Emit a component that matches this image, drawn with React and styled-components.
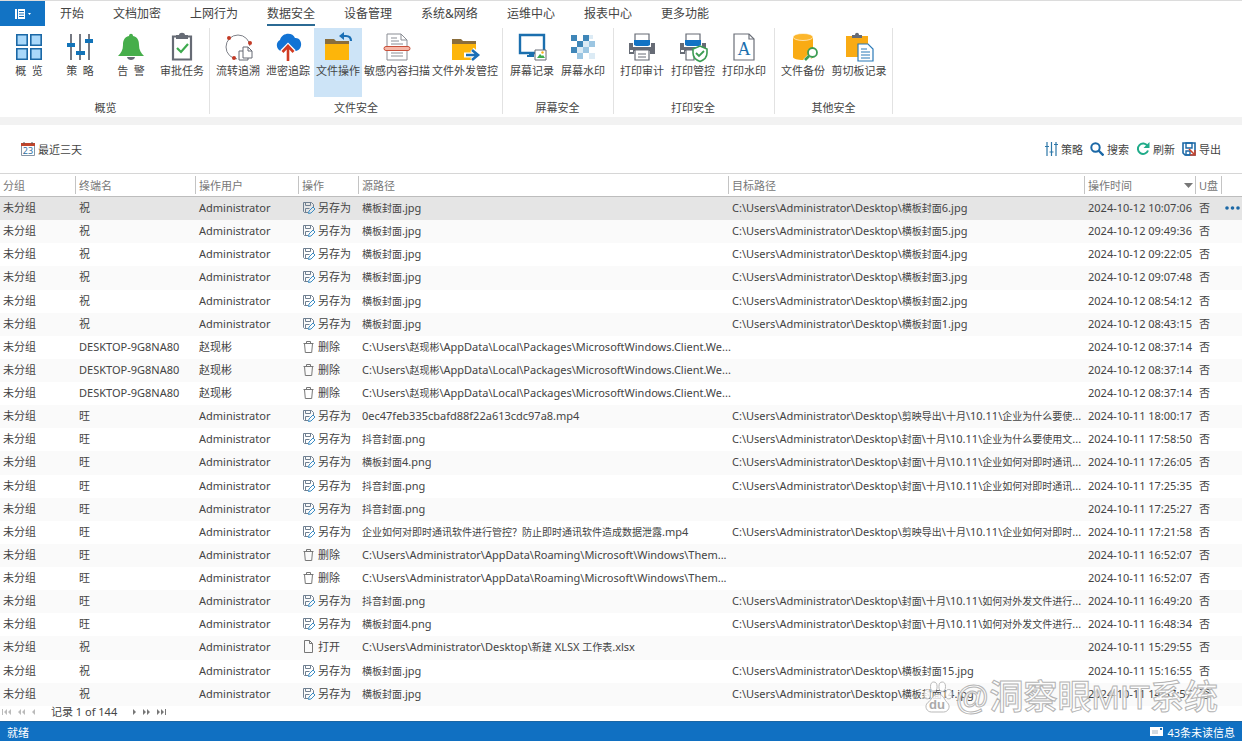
import React from "react";
import styled, { createGlobalStyle } from "styled-components";

const NAVY = "#1b68a6";
const GREY = "#666b75";

const rows = [
  ["祝", "Administrator", "save", "横板封面.jpg", "C:\\Users\\Administrator\\Desktop\\横板封面6.jpg", "2024-10-12 10:07:06"],
  ["祝", "Administrator", "save", "横板封面.jpg", "C:\\Users\\Administrator\\Desktop\\横板封面5.jpg", "2024-10-12 09:49:36"],
  ["祝", "Administrator", "save", "横板封面.jpg", "C:\\Users\\Administrator\\Desktop\\横板封面4.jpg", "2024-10-12 09:22:05"],
  ["祝", "Administrator", "save", "横板封面.jpg", "C:\\Users\\Administrator\\Desktop\\横板封面3.jpg", "2024-10-12 09:07:48"],
  ["祝", "Administrator", "save", "横板封面.jpg", "C:\\Users\\Administrator\\Desktop\\横板封面2.jpg", "2024-10-12 08:54:12"],
  ["祝", "Administrator", "save", "横板封面.jpg", "C:\\Users\\Administrator\\Desktop\\横板封面1.jpg", "2024-10-12 08:43:15"],
  ["DESKTOP-9G8NA80", "赵现彬", "delete", "C:\\Users\\赵现彬\\AppData\\Local\\Packages\\MicrosoftWindows.Client.We...", "", "2024-10-12 08:37:14"],
  ["DESKTOP-9G8NA80", "赵现彬", "delete", "C:\\Users\\赵现彬\\AppData\\Local\\Packages\\MicrosoftWindows.Client.We...", "", "2024-10-12 08:37:14"],
  ["DESKTOP-9G8NA80", "赵现彬", "delete", "C:\\Users\\赵现彬\\AppData\\Local\\Packages\\MicrosoftWindows.Client.We...", "", "2024-10-12 08:37:14"],
  ["旺", "Administrator", "save", "0ec47feb335cbafd88f22a613cdc97a8.mp4", "C:\\Users\\Administrator\\Desktop\\剪映导出\\十月\\10.11\\企业为什么要使...", "2024-10-11 18:00:17"],
  ["旺", "Administrator", "save", "抖音封面.png", "C:\\Users\\Administrator\\Desktop\\封面\\十月\\10.11\\企业为什么要使用文...", "2024-10-11 17:58:50"],
  ["旺", "Administrator", "save", "横板封面4.png", "C:\\Users\\Administrator\\Desktop\\封面\\十月\\10.11\\企业如何对即时通讯...", "2024-10-11 17:26:05"],
  ["旺", "Administrator", "save", "抖音封面.png", "C:\\Users\\Administrator\\Desktop\\封面\\十月\\10.11\\企业如何对即时通讯...", "2024-10-11 17:25:35"],
  ["旺", "Administrator", "save", "抖音封面.png", "", "2024-10-11 17:25:27"],
  ["旺", "Administrator", "save", "企业如何对即时通讯软件进行管控？防止即时通讯软件造成数据泄露.mp4", "C:\\Users\\Administrator\\Desktop\\剪映导出\\十月\\10.11\\企业如何对即时...", "2024-10-11 17:21:58"],
  ["旺", "Administrator", "delete", "C:\\Users\\Administrator\\AppData\\Roaming\\Microsoft\\Windows\\Them...", "", "2024-10-11 16:52:07"],
  ["旺", "Administrator", "delete", "C:\\Users\\Administrator\\AppData\\Roaming\\Microsoft\\Windows\\Them...", "", "2024-10-11 16:52:07"],
  ["旺", "Administrator", "save", "抖音封面.png", "C:\\Users\\Administrator\\Desktop\\封面\\十月\\10.11\\如何对外发文件进行...", "2024-10-11 16:49:20"],
  ["旺", "Administrator", "save", "横板封面4.png", "C:\\Users\\Administrator\\Desktop\\封面\\十月\\10.11\\如何对外发文件进行...", "2024-10-11 16:48:34"],
  ["祝", "Administrator", "open", "C:\\Users\\Administrator\\Desktop\\新建 XLSX 工作表.xlsx", "", "2024-10-11 15:29:55"],
  ["祝", "Administrator", "save", "横板封面.jpg", "C:\\Users\\Administrator\\Desktop\\横板封面15.jpg", "2024-10-11 15:16:55"],
  ["祝", "Administrator", "save", "横板封面.jpg", "C:\\Users\\Administrator\\Desktop\\横板封面14.jpg", "2024-10-11 14:57:57"],
];

const tabs = ["开始", "文档加密", "上网行为", "数据安全", "设备管理", "系统&网络", "运维中心", "报表中心", "更多功能"];

const Folder = () => (
  <>
    <path d="M1 6h9l2 2h13v3H1z" fill="#8a6d3b" />
    <path d="M1 11h24v16H1z" fill="#fdb50a" />
  </>
);

const Printer = () => (
  <>
    <path d="M7 9V1h14v8" fill="#fff" stroke={GREY} strokeWidth="1.2" />
    <path d="M1 10h4v4h18v-4h4v11h-5v-3H6v3H1z" fill={GREY} />
    <path d="M2 17h3v2H2z" fill="#fff" />
    <path d="M6 7h16v5l-2 1H8l-2-1z" fill="#1273c4" />
  </>
);

const icons = {
  overview: (
    <g fill="#a9d8fa" stroke={NAVY} strokeWidth="1.6">
      <path d="M1.8 1.8h10.4v10.4H1.8zM15.8 1.8h10.4v10.4H15.8zM1.8 15.8h10.4v10.4H1.8zM15.8 15.8h10.4v10.4H15.8z" />
    </g>
  ),
  policy: (
    <>
      <path d="M5 1v26M14 1v26M23 1v26" stroke={GREY} strokeWidth="1.8" />
      <path d="M1 10h8v4H1zM10 18h9v4h-9zM19 6h8v4h-8z" fill="#1273b8" />
    </>
  ),
  alarm: (
    <>
      <path d="M10 24h8c-.5 4-7.500 4-8 0z" fill={GREY} />
      <path d="M12 3c0-3 4-3 4 0 5 1 6 5 6 9 0 5 2 8 5 11H1c3-3 5-6 5-11 0-4 1-8 6-9z" fill="#46ae4b" />
    </>
  ),
  approve: (
    <>
      <path d="M5 3.500h18v23H5z" fill="#fff" stroke={GREY} strokeWidth="2.200" />
      <path d="M8 2h3c0-3 6-3 6 0h3v4H8z" fill={GREY} />
      <path d="m9 15 4 4 7-8" fill="none" stroke="#3daa4d" strokeWidth="2.200" />
    </>
  ),
  trace: (
    <>
      <circle cx="14" cy="14" r="12" fill="none" stroke="#7d8088" strokeWidth="1" />
      <g fill="#c33a25">
        <circle cx="5" cy="5" r="2" />
        <circle cx="26" cy="10" r="2" />
        <circle cx="10" cy="25" r="2" />
      </g>
      <path d="M13 13h17v17H13z" fill="#fff" />
      <path d="M15 18h9v9h-9z" fill="#fff" stroke={GREY} />
      <path d="M19 14h5l4 4v7h-9z" fill="#fff" stroke={GREY} />
      <path d="M24 14v4h4" fill="none" stroke={GREY} />
    </>
  ),
  leak: (
    <>
      <path d="M7 18a6 6 0 0 1-1-11c2-8 13-8 15-2 7-1 9 11 1 13z" fill="#1273d4" />
      <path d="M14 28V14M8 19l6-6 6 6" fill="none" stroke="#fff" strokeWidth="5" />
      <path d="M14 28V14M8.500 19l5.500-6 5.500 6" fill="none" stroke="#d13b22" strokeWidth="2.600" />
    </>
  ),
  fileop: (
    <>
      <Folder />
      <path d="M17 3h5q5 0 5 5" fill="none" stroke="#1b6fb5" strokeWidth="2.200" />
      <path d="m20-1-5 4 5 4z" fill="#1b6fb5" />
    </>
  ),
  scan: (
    <>
      <path d="M4 1h14l6 6v20H4z" fill="#fff" stroke="#8a8d94" />
      <path d="M18 1v6h6M8 5h6M8 8h8M8 11h12M8 20h12M8 23h12" fill="none" stroke="#8a8d94" />
      <rect x="1" y="13.500" width="26" height="4" rx="2" fill="#f6b8a8" stroke="#c8503a" />
    </>
  ),
  send: (
    <>
      <Folder />
      <path d="M13 22h13M21 16.500l6 5.500-6 5.500" fill="none" stroke="#fff" strokeWidth="5" />
      <path d="M15 22h12M21 17l6 5-6 5" fill="none" stroke="#1b6fb5" strokeWidth="2.600" />
    </>
  ),
  screen: (
    <>
      <path d="M2 2h24v18H2z" fill="#fff" stroke="#1b6fae" strokeWidth="2.400" />
      <path d="M11 20h5v4H9v-2h2z" fill="#1b6fae" />
      <path d="M17 17h11v10H17z" fill="#fff" stroke={GREY} />
      <path d="m19 25 3-4 2 2 1-1 2 3z" fill="#3daa4d" />
      <circle cx="24.500" cy="19.500" r="1.200" fill="#f6b21b" />
    </>
  ),
  mosaic: (
    <>
      <path d="M2 2h6v6H2zM14 2h6v6h-6zM2 14h6v6H2zM8 8h6v6H8z" fill="#3f86b8" />
      <path d="M14 14h6v6h-6zM20 8h6v6h-6zM8 20h6v6H8z" fill="#9cc6e2" />
      <path d="M20 2h4v4h-4zM14 8h6v6h-6zM8 14h6v6H8zM20 20h6v6h-6z" fill="#dcebf5" />
    </>
  ),
  print: (
    <>
      <Printer />
      <path d="M7 17h14v10H7z" fill="#fff" stroke={GREY} strokeWidth="1.200" />
      <path d="M10 21h8M10 24h8" stroke={GREY} />
    </>
  ),
  guard: (
    <>
      <Printer />
      <path d="M7 17h8v10H7z" fill="#fff" stroke={GREY} strokeWidth="1.200" />
      <path d="m21 13 7 3v4c0 4-3 7-7 8.500-4-1.500-7-4.500-7-8.500v-4z" fill="#fff" stroke="#3c9c53" strokeWidth="1.600" />
      <path d="m17 20 3 3 5-5" fill="none" stroke="#3c9c53" strokeWidth="1.800" />
    </>
  ),
  sign: (
    <>
      <path d="M4 1h15l5 5v21H4z" fill="#fff" stroke="#6b6f78" strokeWidth="1.200" />
      <path d="M19 1v5h5" fill="none" stroke="#6b6f78" strokeWidth="1.200" />
      <text x="14" y="22" textAnchor="middle" fontFamily="Liberation Serif, serif" fontSize="18" fill="#1b6fae">A</text>
    </>
  ),
  backup: (
    <>
      <path d="M4 4v20c0 4 20 4 20 0V4z" fill="#f9ab14" />
      <ellipse cx="14" cy="4" rx="10" ry="3.500" fill="#fcb62c" stroke="#fff" strokeWidth=".6" />
      <path d="m16 28 6-6" stroke="#fff" strokeWidth="5" />
      <circle cx="23.500" cy="19.500" r="4.500" fill="#fff" stroke="#3c9c53" strokeWidth="1.800" />
      <path d="m16 27 4-4" stroke="#3c9c53" strokeWidth="2.600" />
    </>
  ),
  clip: (
    <>
      <path d="M1 3h22v21H1z" fill="#f9ab14" />
      <path d="M7 5V2h3c0-3 4-3 4 0h3v3z" fill={GREY} />
      <path d="M13 11h10l5 5v12H13z" fill="#fff" stroke="#2b7ab8" strokeWidth="1.200" />
      <path d="M16 16h6M16 19h9M16 22h9M16 25h9" stroke="#2b7ab8" strokeWidth="1.200" />
    </>
  ),
};

const groups = [
  {
    title: "概览", gap: 3, pad: "0 3px 0 5px",
    items: [["overview", "概  览"], ["policy", "策  略"], ["alarm", "告  警"], ["approve", "审批任务"]],
  },
  {
    title: "文件安全", gap: 2, pad: "0 4px",
    items: [["trace", "流转追溯"], ["leak", "泄密追踪"], ["fileop", "文件操作"], ["scan", "敏感内容扫描"], ["send", "文件外发管控"]],
  },
  { title: "屏幕安全", gap: 3, pad: "0 6px 0 5px", items: [["screen", "屏幕记录"], ["mosaic", "屏幕水印"]] },
  { title: "打印安全", gap: 3, pad: "0 6px 0 4px", items: [["print", "打印审计"], ["guard", "打印管控"], ["sign", "打印水印"]] },
  { title: "其他安全", gap: 3, pad: "0 4px", items: [["backup", "文件备份"], ["clip", "剪切板记录"]] },
];

const actionNames = { save: "另存为", delete: "删除", open: "打开" };

const actionIcons = {
  save: (
    <>
      <path d="M6 11.500H2.500l-1-1v-9h8l2 2V6" stroke="#6f7f90" />
      <path d="M3.500 1.500v3h5v-3M3.500 11V7.500h4" stroke="#6f7f90" />
      <path d="m7 10 4-4 2 2-4 4-2.500.5z" stroke="#3b8cc4" />
    </>
  ),
  delete: <path d="M1.500 3.500h10M4.500 3V1.500h4V3M2.500 3.500l.8 9h6.400l.8-9" stroke="#777" />,
  open: <path d="M2.500.5h5l3 3v9h-8zM7.500.5v3h3" stroke="#777" />,
};

// Chinese runs are set a size smaller than the latin part of a path
const PathText = ({ text }) =>
  text.split(/([\u4e00-\u9fff？]+)/).map((part, i) => (i % 2 ? <Han key={i}>{part}</Han> : part));

const App = () => (
  <>
    <GlobalStyle />
    <Window>
      <TabBar>
        <FileButton aria-label="文件">
          <svg width="18" height="12" viewBox="0 0 18 12">
            <path d="M1 1h2v10H1zM4 1h7v10H4z" fill="#fff" />
            <path d="M5 3.500h5M5 6h5M5 8.500h5" stroke="#1b6fb5" />
            <path d="M14 5h3l-1.500 2z" fill="#fff" />
          </svg>
        </FileButton>
        {tabs.map((t) => (
          <Tab key={t} $active={t === "数据安全"}>{t}</Tab>
        ))}
      </TabBar>

      <Ribbon>
        {groups.map((g) => (
          <Group key={g.title} $pad={g.pad}>
            <GroupItems $gap={g.gap}>
              {g.items.map(([icon, label]) => (
                <Tool key={icon} $active={icon === "fileop"} $size={label.length}>
                  <svg width="28" height="28" viewBox="0 0 28 28" overflow="visible">{icons[icon]}</svg>
                  <span>{label}</span>
                </Tool>
              ))}
            </GroupItems>
            <GroupTitle>{g.title}</GroupTitle>
          </Group>
        ))}
      </Ribbon>

      <Toolbar>
        <Action>
          <svg width="14" height="14" viewBox="0 0 14 14">
            <path d="M.5 3.500h13v10H.5z" fill="#fff" stroke="#8695a5" />
            <path d="M0 1h14v3H0z" fill="#c0452c" />
            <path d="M3 0v2M11 0v2" stroke="#555" />
            <text x="7" y="12" textAnchor="middle" fontFamily="Noto Sans, sans-serif" fontSize="9" fill="#2f6f9f">23</text>
          </svg>
          最近三天
        </Action>
        <Actions>
          <Action>
            <svg width="14" height="14" viewBox="0 0 14 14">
              <path d="M3 0v14M7.500 0v14M12 0v14M1 4.500h4M5.500 10h4M10 2.500h4" stroke="#2d77a8" strokeWidth="1.200" />
            </svg>
            策略
          </Action>
          <Action>
            <svg width="14" height="14" viewBox="0 0 14 14">
              <circle cx="5.500" cy="5.500" r="4.200" fill="none" stroke="#1b68a6" strokeWidth="2" />
              <path d="m8.500 8.500 5 5" stroke="#1b68a6" strokeWidth="2.400" />
            </svg>
            搜索
          </Action>
          <Action>
            <svg width="14" height="14" viewBox="0 0 14 14">
              <path d="M11.500 4A5.200 5.200 0 1 0 12 8.500" fill="none" stroke="#1fab89" strokeWidth="2" />
              <path d="M13.500 0v6h-6z" fill="#1fab89" />
            </svg>
            刷新
          </Action>
          <Action>
            <svg width="14" height="14" viewBox="0 0 14 14">
              <path d="M1 1h12v12H3l-2-2z" fill="#fff" stroke="#1b68a6" strokeWidth="1.600" />
              <path d="M4 1h6v5H4zM4 9h4v4H4z" fill="none" stroke="#1b68a6" strokeWidth="1.400" />
              <path d="m7 7 5 5M13 8v5H8" fill="none" stroke="#c9442c" strokeWidth="1.600" />
            </svg>
            导出
          </Action>
        </Actions>
      </Toolbar>

      <TableArea>
        <Table>
          <colgroup>
            <Col $w={76} /><Col $w={120} /><Col $w={103} /><Col $w={60} /><Col $w={370} />
            <col />
            <Col $w={111} /><Col $w={26} /><Col $w={20} />
          </colgroup>
          <thead>
            <tr>
              <Th>分组</Th>
              <Th>终端名</Th>
              <Th>操作用户</Th>
              <Th>操作</Th>
              <Th>源路径</Th>
              <Th>目标路径</Th>
              <Th>
                <Sorted>
                  操作时间
                  <svg width="9" height="5" viewBox="0 0 9 5"><path d="M0 0h9L4.500 5z" fill="#777" /></svg>
                </Sorted>
              </Th>
              <Th>U盘</Th>
              <Th aria-label="更多" $last />
            </tr>
          </thead>
          <tbody>
            {rows.map(([host, user, action, from, to, time], i) => (
              <Row key={i} $selected={i === 0}>
                <Td>未分组</Td>
                <Td>{host}</Td>
                <Td>{user}</Td>
                <Td>
                  <Operation>
                    <svg width="14" height="13" viewBox="0 0 14 13" fill="none">{actionIcons[action]}</svg>
                    {actionNames[action]}
                  </Operation>
                </Td>
                <Td><PathText text={from} /></Td>
                <Td><PathText text={to} /></Td>
                <Td>{time}</Td>
                <Td>否</Td>
                <Td>
                  {i === 0 && (
                    <MoreButton aria-label="更多操作">
                      <svg width="15" height="4" viewBox="0 0 15 4" fill="#1b68a6">
                        <circle cx="2" cy="2" r="1.800" /><circle cx="7.500" cy="2" r="1.800" /><circle cx="13" cy="2" r="1.800" />
                      </svg>
                    </MoreButton>
                  )}
                </Td>
              </Row>
            ))}
          </tbody>
        </Table>
      </TableArea>

      <Pager>
        <PageButton aria-label="第一页"><svg width="10" height="6" viewBox="0 0 10 6"><path d="M0 0h1v6H0zM5 0v6L2 3zM9 0v6L6 3z" /></svg></PageButton>
        <PageButton aria-label="上一组"><svg width="8" height="6" viewBox="0 0 8 6"><path d="M4 0v6L1 3zM8 0v6L5 3z" /></svg></PageButton>
        <PageButton aria-label="上一页"><svg width="8" height="6" viewBox="0 0 8 6"><path d="M5 0v6L2 3z" /></svg></PageButton>
        <PageText>记录 1 of 144</PageText>
        <PageButton $on aria-label="下一页"><svg width="8" height="6" viewBox="0 0 8 6"><path d="M3 0v6l3-3z" /></svg></PageButton>
        <PageButton $on aria-label="下一组"><svg width="8" height="6" viewBox="0 0 8 6"><path d="M0 0v6l3-3zM4 0v6l3-3z" /></svg></PageButton>
        <PageButton $on aria-label="最后一页"><svg width="10" height="6" viewBox="0 0 10 6"><path d="M1 0v6l3-3zM5 0v6l3-3zM9 0h1v6H9z" /></svg></PageButton>
      </Pager>

      <StatusBar>
        <span>就绪</span>
        <Unread>
          <svg width="13" height="9" viewBox="0 0 13 9">
            <path d="M0 0h13v9H0z" fill="#fff" />
            <path d="M2 4h6M2 6h6" stroke="#a9b6c2" />
            <path d="M10 1h2v2h-2z" fill="#1b6fb5" />
          </svg>
          43条未读信息
        </Unread>
      </StatusBar>

      <Watermark>
        <svg width="30" height="34" viewBox="0 0 32 34">
          <g fill="#fff" fillOpacity=".8" stroke="#b4b4b4" strokeWidth="1">
            <ellipse cx="4.500" cy="14" rx="3.500" ry="5" />
            <ellipse cx="11.500" cy="6" rx="3.500" ry="5" />
            <ellipse cx="20.500" cy="6" rx="3.500" ry="5" />
            <ellipse cx="27.500" cy="14" rx="3.500" ry="5" />
            <path d="M16 14c6 0 7 7 10 9 4 4 1 10-4 10H9c-5 0-8-6-4-10 4-2 5-9 11-9z" />
          </g>
          <DuText x="15" y="30" textAnchor="middle">du</DuText>
        </svg>
        @洞察眼MIT系统
      </Watermark>
    </Window>
  </>
);

export default App;

const GlobalStyle = createGlobalStyle`
  *{
    box-sizing: border-box;
  }

  body{
    margin: 0;
    background: #fff;
    color: #444;
    font-family: "Noto Sans", "Noto Sans CJK SC", sans-serif;
    font-size: 11px;
  }

  button{
    border: 0;
    padding: 0;
    background: none;
    color: inherit;
    font: inherit;
    white-space: pre;
    cursor: pointer;
  }

  svg{
    display: block;
    flex: none;
  }
`

const Window = styled.div`
  position: relative;
  display: flex;
  flex-direction: column;
  min-height: 100vh;
  border-top: 1px solid #dcdcdc;
`

const TabBar = styled.nav`
  display: flex;
  align-items: stretch;
  gap: 29px;
  height: 25px;
`

const FileButton = styled.button`
  display: flex;
  align-items: center;
  justify-content: center;
  width: 45px;
  margin-right: -14px;
  background: #1273c4;
`

const Tab = styled.button`
  font-size: 12px;
  line-height: 20px;
  padding-top: 3px;
  border-bottom: 2px solid ${({ $active }) => ($active ? "#2b6a94" : "transparent")};
`

const Ribbon = styled.div`
  display: flex;
  padding: 2px 0 3px;
  border-bottom: 8px solid #f2f2f2;
`

const Group = styled.section`
  display: flex;
  flex-direction: column;
  justify-content: space-between;
  height: 86px;
  padding: ${({ $pad }) => $pad};
  border-right: 1px solid #e2e2e2;
`

const GroupItems = styled.div`
  display: flex;
  gap: ${({ $gap }) => $gap}px;
`

const Tool = styled.button`
  display: flex;
  flex-direction: column;
  align-items: center;
  gap: 2px;
  width: ${({ $size }) => ({ 5: 58, 6: 66 }[$size] || 48)}px;
  height: 69px;
  padding-top: 5px;
  line-height: 16px;
  background: ${({ $active }) => ($active ? "#cde4f7" : "none")};
`

const GroupTitle = styled.div`
  text-align: center;
  line-height: 12px;
`

const Toolbar = styled.div`
  display: flex;
  align-items: center;
  justify-content: space-between;
  height: 48px;
  padding: 0 21px;
`

const Actions = styled.div`
  display: flex;
  gap: 7px;
`

const Action = styled.button`
  display: flex;
  align-items: center;
  gap: 3px;
`

const TableArea = styled.div`
  display: flex;
  flex: 1;
`

const Table = styled.table`
  width: 100%;
  table-layout: fixed;
  border-collapse: separate;
  border-spacing: 0;
`

const Col = styled.col`
  width: ${({ $w }) => $w}px;
`

const Th = styled.th`
  height: 24px;
  padding: 0 3px;
  border-top: 1px solid #d6d6d6;
  border-bottom: 1px solid #bdbdbd;
  background: ${({ $last }) => ($last ? "none" : "linear-gradient(#c4c4c4, #c4c4c4) right center / 1px 18px no-repeat")};
  color: #777;
  font-weight: normal;
  text-align: left;
  white-space: nowrap;
`

const Sorted = styled.span`
  display: flex;
  align-items: center;
  justify-content: space-between;
`

const Row = styled.tr`
  background: ${({ $selected }) => ($selected ? "#e5e5e5" : "#fff")};

  &:nth-child(even){
    background: #fafafa;
  }
`

const Td = styled.td`
  padding: 0 0 2px 3px;
  line-height: 21px;
  white-space: nowrap;
`

const Han = styled.span`
  font-size: 10px;
  line-height: 1;
`

const Operation = styled.span`
  display: flex;
  align-items: center;
  gap: 2px;
`

const MoreButton = styled.button`
  display: flex;
`

const Pager = styled.div`
  display: flex;
  align-items: center;
  gap: 5px;
  height: 15px;
  padding: 0 0 4px 2px;
`

const PageButton = styled.button`
  fill: ${({ $on }) => ($on ? "#777" : "#bbb")};
`

const PageText = styled.span`
  padding: 0 8px;
  line-height: 11px;
`

const StatusBar = styled.footer`
  display: flex;
  align-items: center;
  justify-content: space-between;
  height: 20px;
  padding: 0 7px;
  border-top: 1px solid #1b66a5;
  background: #1070c2;
  color: #fff;
`

const Unread = styled.span`
  display: flex;
  align-items: center;
  gap: 4px;
`

const Watermark = styled.div`
  position: absolute;
  right: 24px;
  bottom: 24px;
  display: flex;
  align-items: center;
  gap: 2px;
  color: rgba(255, 255, 255, 0.8);
  font-family: "Liberation Sans", "Noto Sans CJK SC", sans-serif;
  font-size: 34px;
  font-weight: 500;
  line-height: 40px;
  -webkit-text-stroke: 1px #b4b4b4;
  pointer-events: none;
`

const DuText = styled.text`
  font-size: 14px;
  font-weight: 700;
  fill: #aaa;
  -webkit-text-stroke: 0;
`
